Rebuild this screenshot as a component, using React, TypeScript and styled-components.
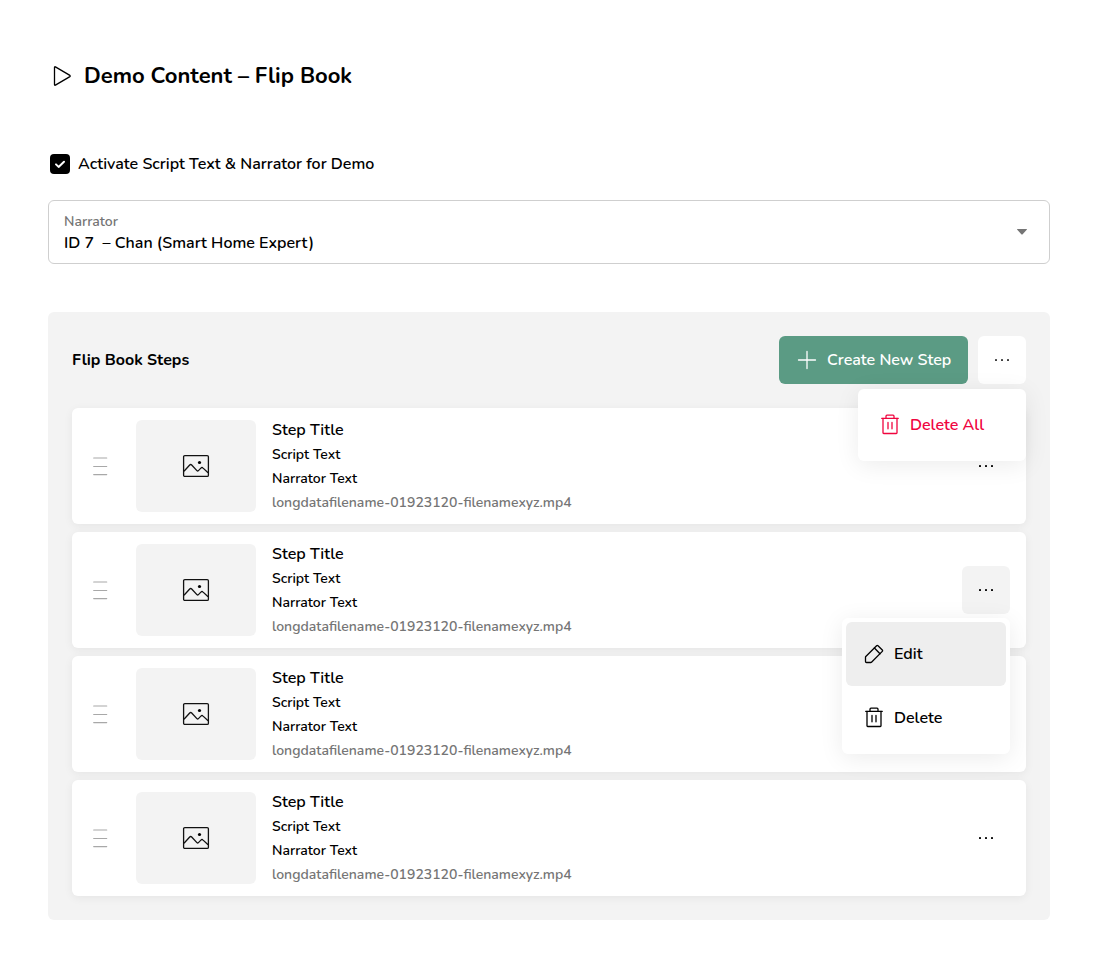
import React from "react";
import styled, { createGlobalStyle } from "styled-components";

const GlobalStyle = createGlobalStyle`
  *, *::before, *::after { box-sizing: border-box; }
  body {
    margin: 0;
    background: #fff;
    color: #000;
    font-family: Nunito, Lato, sans-serif;
    font-size: 16px;
    font-weight: 600;
    line-height: 24px;
  }
  button { font: inherit; border: 0; padding: 0; cursor: pointer; }
  svg { display: block; flex: none; }
`;

const Page = styled.main`
  display: flex;
  flex-direction: column;
  min-height: 968px;
  padding: 60px 48px 48px;
`;

const TitleBar = styled.header`
  display: flex;
  align-items: center;
  gap: 10px;
  height: 32px;
  padding-left: 2px;
`;

const Title = styled.h1`
  margin: 0;
  font-size: 22px;
  font-weight: 700;
  line-height: 32px;
`;

const CheckboxLabel = styled.label`
  display: flex;
  align-items: center;
  gap: 8px;
  margin-top: 60px;
  padding-left: 2px;
`;

const CheckboxBox = styled.span`
  display: grid;
  place-items: center;
  width: 20px;
  height: 20px;
  border-radius: 4px;
  background: #000;
`;

const Select = styled.div`
  display: flex;
  align-items: center;
  justify-content: space-between;
  height: 64px;
  margin-top: 24px;
  padding: 0 21px 0 15px;
  border: 1px solid #cfcfcf;
  border-radius: 6px;
`;

const SelectText = styled.div`
  padding-top: 2px;
`;

const SelectLabel = styled.div`
  color: #757575;
  font-size: 14px;
  line-height: 20px;
`;

const SelectValue = styled.div`
  line-height: 22px;
  white-space: pre;
`;

const Panel = styled.section`
  margin-top: 48px;
  padding: 24px;
  border-radius: 6px;
  background: #f3f3f3;
`;

const PanelHeader = styled.div`
  display: flex;
  align-items: center;
  height: 48px;
  margin-bottom: 24px;
`;

const PanelTitle = styled.h2`
  flex: 1;
  margin: 0;
  font-size: 16px;
  font-weight: 700;
`;

const CreateButton = styled.button`
  display: flex;
  align-items: center;
  gap: 8px;
  width: 189px;
  height: 48px;
  margin-right: 10px;
  padding: 0 16px;
  border-radius: 6px;
  background: #5b9b84;
  color: #fff;
  white-space: nowrap;
`;

const MenuAnchor = styled.div`
  position: relative;
`;

const MoreButton = styled.button<{ $tone?: "white" | "grey" }>`
  display: grid;
  place-items: center;
  width: 48px;
  height: 48px;
  border-radius: 6px;
  color: ${(p) => (p.$tone === "white" ? "#333" : "#000")};
  background: ${(p) =>
    p.$tone === "white" ? "#fff" : p.$tone === "grey" ? "#f3f3f3" : "transparent"};
`;

const Menu = styled.div<{ $offset: number }>`
  position: absolute;
  z-index: 2;
  top: calc(100% + ${(p) => p.$offset}px);
  right: 0;
  width: 168px;
  padding: 4px;
  border-radius: 6px;
  background: #fff;
  box-shadow: 0 4px 24px rgba(0, 0, 0, 0.08);
`;

const MenuItem = styled.button<{ $active?: boolean; $danger?: boolean }>`
  display: flex;
  align-items: center;
  gap: 8px;
  width: 100%;
  height: 64px;
  padding: 0 16px;
  border-radius: 6px;
  background: ${(p) => (p.$active ? "#eee" : "transparent")};
  color: ${(p) => (p.$danger ? "#f0053f" : "#000")};
`;

const Steps = styled.div`
  display: flex;
  flex-direction: column;
  gap: 8px;
`;

const Card = styled.article`
  display: flex;
  align-items: center;
  height: 116px;
  padding: 0 16px;
  border-radius: 6px;
  background: #fff;
  box-shadow: 0 2px 10px rgba(0, 0, 0, 0.06);
`;

const Thumb = styled.div`
  display: grid;
  place-items: center;
  width: 120px;
  height: 92px;
  margin: 0 16px 0 24px;
  border-radius: 6px;
  background: #f3f3f3;
`;

const Details = styled.div`
  flex: 1;
`;

const StepTitle = styled.div`
  line-height: 24px;
`;

const StepLine = styled.div<{ $muted?: boolean }>`
  height: 24px;
  font-size: 14px;
  line-height: 26px;
  color: ${(p) => (p.$muted ? "#757575" : "#000")};
`;

const PlayIcon = () => (
  <svg width="24" height="24" viewBox="0 0 24 24" fill="none" stroke="currentColor" strokeWidth="1.3" strokeLinejoin="round">
    <path d="M4.5 3.4v17.2c0 .5.5.8.9.5l14.5-8.500c.4-.3.4-.9 0-1.200L5.400 2.900c-.4-.3-.9 0-.9.5Z" />
  </svg>
);

const CheckIcon = () => (
  <svg width="20" height="20" viewBox="0 0 20 20" fill="none" stroke="#fff" strokeWidth="2" strokeLinecap="round" strokeLinejoin="round">
    <path d="m6 10.4 2.6 2.5L14 7.8" />
  </svg>
);

const CaretIcon = () => (
  <svg width="12" height="8" viewBox="0 0 12 8" fill="#757575">
    <path d="M1 1h10c0 .5-.2.8-.5 1.1L6.7 6.2a1 1 0 0 1-1.4 0L1.5 2.1C1.2 1.8 1 1.5 1 1Z" />
  </svg>
);

const PlusIcon = () => (
  <svg width="24" height="24" viewBox="0 0 24 24" fill="none" stroke="currentColor" strokeWidth="1.3" strokeLinecap="round">
    <path d="M12 3.5v17M3.5 12h17" />
  </svg>
);

const DotsIcon = () => (
  <svg width="24" height="24" viewBox="0 0 24 24" fill="currentColor">
    <rect x="5" y="11" width="2" height="2" rx=".4" />
    <rect x="11" y="11" width="2" height="2" rx=".4" />
    <rect x="17" y="11" width="2" height="2" rx=".4" />
  </svg>
);

const DragIcon = () => (
  <svg width="24" height="24" viewBox="0 0 24 24" fill="none" stroke="#a8a8a8" strokeWidth="1.2" strokeLinecap="round">
    <path d="M5.7 4h13M5.7 12.5h13M5.7 20.6h13" />
  </svg>
);

const ImageIcon = () => (
  <svg width="28" height="24" viewBox="0 0 28 24" fill="none" stroke="#111" strokeWidth="1.3" strokeLinejoin="round">
    <rect x="1.6" y="1.6" width="24.8" height="20.8" rx="1.2" />
    <path d="m2 17.2 5.7-6.2c.6-.6 1.4-.6 2 0l5.200 5.600c.5.5 1 .5 1.500 0l2.500-2.500c.7-.7 1.500-.7 2.200 0l5 4.700" />
    <circle cx="17.5" cy="8.5" r="1.6" fill="#000" stroke="none" />
  </svg>
);

const TrashIcon = () => (
  <svg width="24" height="24" viewBox="0 0 24 24" fill="none" stroke="currentColor" strokeWidth="1.3" strokeLinecap="round" strokeLinejoin="round">
    <path d="M3.7 5.3h16.6" />
    <path d="M8 5.3V3.2c0-.6.4-1 1-1h6c.6 0 1 .4 1 1v2.1" />
    <path d="M5 5.3v14.5c0 .4.3.7.7.7h12.6c.4 0 .7-.3.7-.7V5.3" />
    <path d="M10 9.5v6.3M14 9.5v6.3" />
  </svg>
);

const PencilIcon = () => (
  <svg width="24" height="24" viewBox="0 0 24 24" fill="none" stroke="currentColor" strokeWidth="1.3" strokeLinecap="round" strokeLinejoin="round">
    <path d="M3.5 15.2v4.3c0 .6.4 1 1 1h4.3c.3 0 .5-.1.7-.3L20.3 9.4c.4-.4.4-1 0-1.4L16 3.7c-.4-.4-1-.4-1.4 0L3.8 14.5c-.2.2-.3.4-.3.7Z" />
    <path d="m12.4 6 5.6 5.7" />
  </svg>
);

const steps = [
  { id: 1, open: false },
  { id: 2, open: true },
  { id: 3, open: false },
  { id: 4, open: false },
];

function StepCard({ open }: { open: boolean }) {
  return (
    <Card>
      <DragIcon />
      <Thumb>
        <ImageIcon />
      </Thumb>
      <Details>
        <StepTitle>Step Title</StepTitle>
        <StepLine>Script Text</StepLine>
        <StepLine>Narrator Text</StepLine>
        <StepLine $muted>longdatafilename-01923120-filenamexyz.mp4</StepLine>
      </Details>
      <MenuAnchor>
        <MoreButton aria-label="Step options" $tone={open ? "grey" : undefined}>
          <DotsIcon />
        </MoreButton>
        {open && (
          <Menu $offset={4}>
            <MenuItem $active>
              <PencilIcon />
              Edit
            </MenuItem>
            <MenuItem>
              <TrashIcon />
              Delete
            </MenuItem>
          </Menu>
        )}
      </MenuAnchor>
    </Card>
  );
}

export default function App() {
  return (
    <>
      <GlobalStyle />
      <Page>
        <TitleBar>
          <PlayIcon />
          <Title>Demo Content – Flip Book</Title>
        </TitleBar>
        <CheckboxLabel>
          <CheckboxBox>
            <CheckIcon />
          </CheckboxBox>
          Activate Script Text &amp; Narrator for Demo
        </CheckboxLabel>
        <Select>
          <SelectText>
            <SelectLabel>Narrator</SelectLabel>
            <SelectValue>{"ID 7  – Chan (Smart Home Expert)"}</SelectValue>
          </SelectText>
          <CaretIcon />
        </Select>
        <Panel>
          <PanelHeader>
            <PanelTitle>Flip Book Steps</PanelTitle>
            <CreateButton>
              <PlusIcon />
              Create New Step
            </CreateButton>
            <MenuAnchor>
              <MoreButton aria-label="List options" $tone="white">
                <DotsIcon />
              </MoreButton>
              <Menu $offset={5}>
                <MenuItem $danger>
                  <TrashIcon />
                  Delete All
                </MenuItem>
              </Menu>
            </MenuAnchor>
          </PanelHeader>
          <Steps>
            {steps.map((step) => (
              <StepCard key={step.id} open={step.open} />
            ))}
          </Steps>
        </Panel>
      </Page>
    </>
  );
}
